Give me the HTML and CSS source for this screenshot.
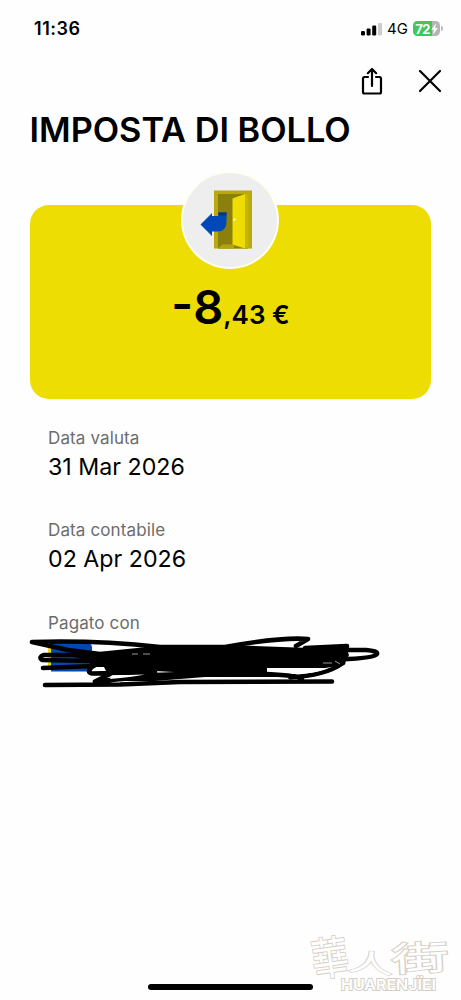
FILE: index.html
```html
<!DOCTYPE html>
<html lang="it">
<head>
<meta charset="utf-8">
<title>Imposta di bollo</title>
<link rel="stylesheet" href="styles.css">
</head>
<body>
<main class="screen">
  <div class="status">
    <span class="time">11:36</span>
    <div class="status-right">
      <svg class="signal" width="22" height="14" viewBox="0 0 22 14"><rect x="0" y="9" width="4" height="4.500" rx="1.200"/><rect x="5.600" y="6.500" width="4" height="7" rx="1.200"/><rect x="11.200" y="3.500" width="4" height="10" rx="1.200"/><rect class="off" x="17" y="1" width="4" height="12.500" rx="1.200"/></svg>
      <span class="network">4G</span>
      <div class="battery"><span class="level">72</span><svg class="bolt" width="7" height="12" viewBox="0 0 7 12"><path d="M5 .3 .3 6.700h2.500L2 11.700 6.800 5H4.200z"/></svg></div>
    </div>
  </div>
  <nav class="actions">
    <svg class="icon" width="22" height="28" viewBox="0 0 22 28"><path d="M7 10H3.500Q2 10 2 11.500V25q0 1.500 1.500 1.500h15q1.500 0 1.500-1.500V11.500q0-1.500-1.500-1.500H15M11 19V2M6.800 6.200 11 2l4.200 4.200"/></svg>
    <svg class="icon" width="24" height="24" viewBox="0 0 24 24"><path d="M2 2 22 22M22 2 2 22"/></svg>
  </nav>
  <h1 class="title">IMPOSTA DI BOLLO</h1>
  <section class="card">
    <div class="badge">
      <svg width="94" height="94" viewBox="0 0 94 94">
        <path fill="#b9a90d" d="M31 17.500h38v58H31z"/>
        <path fill="#8c800c" d="M35 21h30v54.500H35z"/>
        <path fill="#b2a40c" d="m35 75.500 4-4h12v4z"/>
        <path fill="#c7b600" d="M62 21h3.500v54.500H62z"/>
        <path fill="#eddd02" d="m49.500 25.500 12.500-4.500v54.500l-12.500-4z"/>
        <circle cx="51.500" cy="46.500" r="1.300" fill="#fff9a0"/>
        <path fill="#0048b8" d="M35.500 39.500h8v9q0 10-9 10H29v4.500L17.500 51.500 29 40v3h6.500z"/>
        <path fill="#07348b" d="M35.500 39.500h8v3h-8z"/>
      </svg>
    </div>
    <div class="amount"><span class="minus">-</span><span class="whole">8</span><span class="cents">,43 €</span></div>
  </section>
  <dl class="details">
    <div class="row"><dt>Data valuta</dt><dd>31 Mar 2026</dd></div>
    <div class="row"><dt>Data contabile</dt><dd>02 Apr 2026</dd></div>
    <div class="row"><dt>Pagato con</dt></div>
  </dl>
  <svg class="scribble" width="370" height="60" viewBox="20 630 370 60">
    <path fill="#eddd02" d="M48 646h4v24h-4z"/>
    <path fill="#0048b0" d="M51 643h37q3 0 4 4v24.500H51z"/>
    <path class="mass" d="M75 652 100 653 145 648 155 645H228L310 648 345 645 349 655 344 665 325 668H267V674L210 674 155 671 106 671 104 667 90 667 90 661 73 657z"/>
    <path class="ink" d="M32 642Q95 640 160 647L225 647Q280 637 308 639L296 646M32 642 68 650 100 654 150 649M75 655 44 655Q38 657 42 660L92 661M43 668 94 666"/>
    <path class="ink" d="M92 667Q86 672 92 673.500L112 673 155 672M112 673 95 681.500Q135 678 155 675L210 673Q285 673 302 678M45 685 120 684.500 180 682 332 681.500M290 677Q325 676 343 663"/>
    <path class="ink" d="M305 648 347 646M346 650 366 650Q378 651 377 654 375 658 340 659.500"/>
    <path class="mass" d="M150 675 210 672 267 672 290 677 205 677 155 681 120 681z"/>
    <path class="gap" d="M267 668.500H328Q312 674 294 674 282 671 267 670zM110 679Q132 677 145 674.500L112 675.500z"/>
    <path class="speck" d="M132 654h6m5 0h7M323 663h9m3-2 5 3"/>
  </svg>
  <footer class="footer">
    <div class="home"></div>
    <svg class="watermark" width="153" height="82" viewBox="308 916 153 82">
      <g class="brush">
        <text font-size="45" transform="translate(314 977) rotate(-8) scale(.82 1)">華</text>
        <text font-size="44" transform="translate(347 970) rotate(5) scale(1.050 .56)">人</text>
        <text font-size="36" transform="translate(392 972) rotate(-3) scale(1.600 .95)">街</text>
      </g>
      <text class="latin" x="341" y="990" textLength="95" lengthAdjust="spacingAndGlyphs">HUARENJÏEI</text>
    </svg>
  </footer>
</main>
</body>
</html>
```
FILE: styles.css
```css
* { box-sizing: border-box; }
body { margin: 0; background: #fff; color: #000; font-family: Inter, sans-serif; }
.screen { position: relative; display: flex; flex-direction: column; width: 461px; height: 1000px; overflow: hidden; background: #fefefe; }
.status { display: flex; justify-content: space-between; align-items: center; height: 58px; padding: 0 18px 1px 34px; }
.time { font-size: 18px; font-weight: 600; letter-spacing: .55px; }
.status-right { display: flex; align-items: center; }
.signal .off { fill: #ccc; }
.network { margin: 0 5px 0 4px; font-size: 15px; font-weight: 400; }
.battery { position: relative; display: flex; align-items: center; justify-content: center; gap: 1px; width: 27px; height: 15px; margin-right: 3px; border-radius: 4.500px; background: linear-gradient(90deg, #40c65c 72%, #b5b5b5 72%); color: #fff; }
.battery::after { content: ""; position: absolute; right: -3px; top: 5px; width: 2px; height: 5px; border-radius: 0 2px 2px 0; background: #bbb; }
.level { font-size: 13px; font-weight: 700; letter-spacing: -.5px; }
.bolt { fill: #fff; }
.actions { display: flex; justify-content: flex-end; align-items: center; gap: 35px; height: 46px; padding: 0 19px 0 0; }
.icon { fill: none; stroke: #000; stroke-width: 2.200; stroke-linecap: round; stroke-linejoin: round; }
.title { margin: 0; padding-left: 29.500px; height: 100.500px; font-size: 34.300px; line-height: 51px; font-weight: 600; white-space: nowrap; }
.card { position: relative; width: 401px; height: 194px; margin-left: 30px; padding-top: 72px; border-radius: 19px; background: #eddd02; }
.badge { position: absolute; left: 151px; top: -34px; width: 98px; height: 98px; padding: 2px; border-radius: 50%; background: #fffef0; }
.badge svg { display: block; border-radius: 50%; background: #eee; }
.amount { display: flex; align-items: baseline; justify-content: center; font-weight: 600; line-height: 60px; }
.minus, .whole { font-size: 47px; }
.minus { transform: translateY(-3px); }
.cents { font-size: 26px; }
.details { margin: 28.500px 0 0 48px; }
.row { height: 92.300px; }
.row dt { color: #6c6c6c; font-size: 17px; line-height: 22px; letter-spacing: .12px; }
.row dd { margin: 4px 0 0; font-size: 23.200px; line-height: 28px; }
.scribble { position: absolute; left: 20px; top: 630px; }
.mass { fill: #000; }
.ink { fill: none; stroke: #000; stroke-width: 4.600; stroke-linecap: round; stroke-linejoin: round; }
.gap { fill: #fff; }
.speck { fill: none; stroke: #ddd; stroke-width: .7; }
.footer { margin-top: auto; height: 74px; display: flex; align-items: flex-end; padding: 0 0 10px 148px; }
.home { width: 165px; height: 6px; border-radius: 3px; background: #000; }
.watermark { position: absolute; left: 308px; top: 916px; overflow: visible; }
.brush { fill: #fff; stroke: #d6d1c7; stroke-width: 2; paint-order: stroke; font-family: "Noto Sans CJK TC", sans-serif; }
.latin { fill: #fff; stroke: #d4cfc5; stroke-width: 1.800; paint-order: stroke; font: 600 15px Inter, sans-serif; }
```
